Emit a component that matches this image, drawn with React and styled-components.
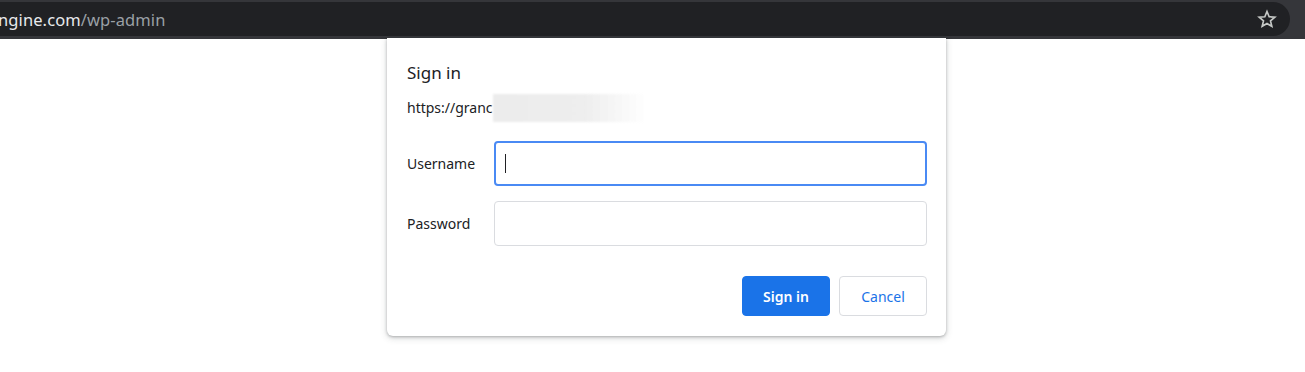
import React from "react";
import styled, { createGlobalStyle } from "styled-components";

const GlobalStyle = createGlobalStyle`
  html, body {
    margin: 0;
    padding: 0;
    background: #ffffff;
    font-family: "Segoe UI", "Noto Sans", "Open Sans", sans-serif;
    overflow: hidden;
  }
`;

const Toolbar = styled.div`
  height: 39px;
  background: #35363a;
  display: flex;
  align-items: center;
  padding: 0 15px 0 0;
  box-sizing: border-box;
`;

const Omnibox = styled.div`
  flex: 1;
  height: 34px;
  margin-top: -1px;
  background: #202124;
  border-radius: 0 17px 17px 0;
  display: flex;
  align-items: center;
  justify-content: space-between;
  padding: 0 13px 0 0;
  overflow: hidden;
`;

const Url = styled.div`
  margin-left: -2px;
  font-size: 16.5px;
  color: #e8eaed;
  white-space: nowrap;
  letter-spacing: 0.1px;
  span {
    color: #9aa0a6;
  }
`;

const Page = styled.div`
  position: relative;
  height: 333px;
`;

const Dialog = styled.div`
  position: absolute;
  left: 387px;
  top: -1px;
  width: 559px;
  height: 298px;
  box-sizing: border-box;
  background: #fff;
  border-radius: 0 0 6px 6px;
  box-shadow: 0 1px 3px rgba(60, 64, 67, 0.35), 0 2px 6px 1px rgba(60, 64, 67, 0.15);
  padding: 22px 19px 20px 20px;
  display: flex;
  flex-direction: column;
`;

const Title = styled.div`
  font-size: 17px;
  line-height: 26px;
  color: #202124;
`;

const Origin = styled.div`
  display: flex;
  align-items: center;
  margin-top: 8px;
  font-size: 14px;
  line-height: 28px;
  color: #202124;
`;

const Blur = styled.div`
  width: 154px;
  height: 28px;
  background: linear-gradient(90deg, #ececec 0%, #eeeeee 60%, rgba(245, 245, 245, 0) 100%);
  filter: blur(1px);
`;

const Fields = styled.div`
  margin-top: 19px;
  display: grid;
  grid-template-columns: 87px 1fr;
  row-gap: 15px;
  align-items: center;
`;

const Label = styled.label`
  font-size: 14px;
  color: #202124;
`;

const Input = styled.div`
  height: 45px;
  box-sizing: border-box;
  border-radius: 4px;
  border: ${(p) => (p.$focused ? "2px solid #4a8af4" : "1px solid #dadce0")};
  display: flex;
  align-items: center;
  padding-left: 9px;
`;

const Caret = styled.div`
  width: 1px;
  height: 19px;
  background: #202124;
`;

const Actions = styled.div`
  margin-top: auto;
  display: flex;
  justify-content: flex-end;
  gap: 9px;
`;

const Button = styled.button`
  width: 88px;
  height: 40px;
  border-radius: 4px;
  font-family: inherit;
  font-size: 14px;
  cursor: pointer;
  border: 1px solid ${(p) => (p.$primary ? "#1a73e8" : "#dadce0")};
  background: ${(p) => (p.$primary ? "#1a73e8" : "#ffffff")};
  color: ${(p) => (p.$primary ? "#ffffff" : "#1a73e8")};
  font-weight: ${(p) => (p.$primary ? 600 : 400)};
`;

function Star() {
  return (
    <svg width="20" height="20" viewBox="0 0 24 24" fill="none" stroke="#c4c7c5" strokeWidth="2" strokeLinejoin="miter">
      <polygon points="12,3 14.6,9.3 21.4,9.8 16.2,14.2 17.8,20.8 12,17.3 6.2,20.8 7.8,14.2 2.6,9.8 9.4,9.3" />
    </svg>
  );
}

export default function App() {
  return (
    <>
      <GlobalStyle />
      <Toolbar>
        <Omnibox>
          <Url>
            ngine.com<span>/wp-admin</span>
          </Url>
          <Star />
        </Omnibox>
      </Toolbar>
      <Page>
        <Dialog>
          <Title>Sign in</Title>
          <Origin>
            https://granc
            <Blur />
          </Origin>
          <Fields>
            <Label>Username</Label>
            <Input $focused>
              <Caret />
            </Input>
            <Label>Password</Label>
            <Input />
          </Fields>
          <Actions>
            <Button $primary>Sign in</Button>
            <Button>Cancel</Button>
          </Actions>
        </Dialog>
      </Page>
    </>
  );
}
